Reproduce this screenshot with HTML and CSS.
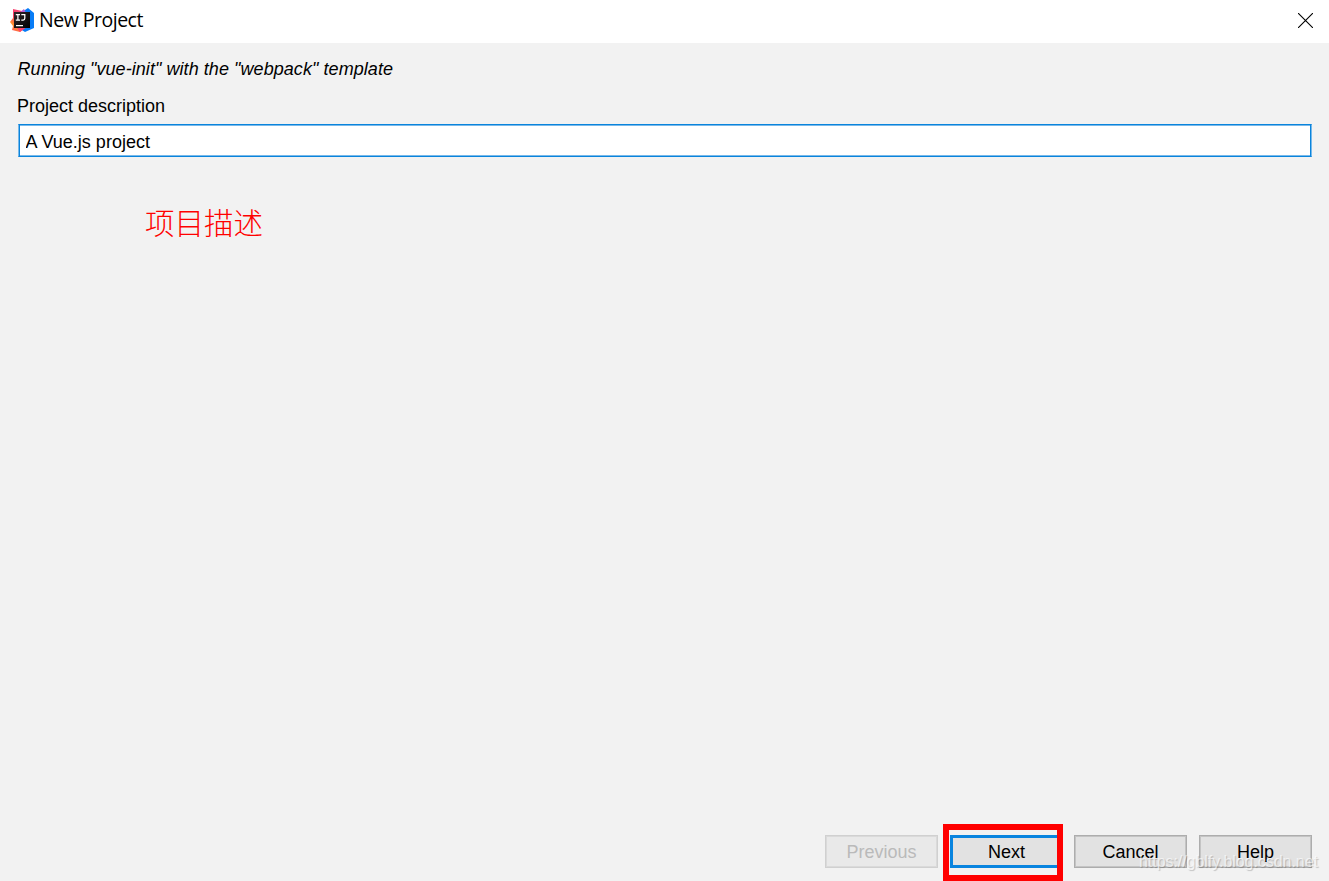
FILE: index.html
```
<!DOCTYPE html>
<html lang="en">
<head>
<meta charset="utf-8">
<title>New Project</title>
<link rel="stylesheet" href="styles.css">
</head>
<body>
<div class="dialog">
  <header class="titlebar">
    <svg class="logo" width="24" height="24" viewBox="0 0 24 24">
      <defs>
        <linearGradient id="warm" x1="0" y1="1" x2="0.4" y2="0"><stop offset="0" stop-color="#ff3e62"/><stop offset=".35" stop-color="#ff922e"/><stop offset=".7" stop-color="#fb3e68"/><stop offset="1" stop-color="#f54573"/></linearGradient>
        <linearGradient id="dark" x1="0" y1="0" x2="1" y2="1"><stop offset="0" stop-color="#30262c"/><stop offset="1" stop-color="#000"/></linearGradient>
      </defs>
      <path d="M3 1 12 3 15 19 10 24 2 22 3 18 0 14 3 10Z" fill="url(#warm)"/>
      <path d="M12 4 18 0 24 5V20L15 24 7 19Z" fill="#087cf6"/>
      <path d="M10 19H17L10 24 7 20Z" fill="#ff416b"/>
      <path d="M9 5 14 1 16 5Z" fill="#b65bd2"/>
      <path d="M4 4H20V20H4Z" fill="url(#dark)"/>
      <path d="M5.8 6.5H10M7.9 6.5V12M5.8 12H10M11.3 6.5H14.8V10.3Q14.8 12 13.2 12H11.3M6 17.5H13" fill="none" stroke="#fff" stroke-width="1.25"/>
    </svg>
    <h1 class="title">New Project</h1>
    <svg class="close" width="15" height="15" viewBox="0 0 15 15"><path d="M0 0 15 15M15 0 0 15" stroke="#000" stroke-width="1.1"/></svg>
  </header>
  <main class="content">
    <p class="status">Running "vue-init" with the "webpack" template</p>
    <label class="label" for="description">Project description</label>
    <input class="field" id="description" value="A Vue.js project">
    <p class="note">项目描述</p>
  </main>
  <footer class="actions">
    <button class="button disabled" disabled>Previous</button>
    <div class="highlight"><button class="button primary">Next</button></div>
    <button class="button">Cancel</button>
    <button class="button">Help</button>
  </footer>
  <div class="watermark">https://gblfy.blog.csdn.net</div>
</div>
</body>
</html>
```
FILE: styles.css
```
* { box-sizing: border-box; }
body { margin: 0; font: 18px/22px "Liberation Sans", Arial, sans-serif; color: #000; }
.dialog { position: relative; display: flex; flex-direction: column; width: 1329px; height: 881px; overflow: hidden; background: #f2f2f2; }
.titlebar { display: flex; align-items: center; height: 43px; padding: 0 16px 3px 10px; background: #fff; }
.logo { flex: none; }
.title { margin: 0 0 0 5px; font: 400 19.5px/26px "Open Sans", "Noto Sans", sans-serif; letter-spacing: -.5px; }
.close { margin: 1px 0 0 auto; }
.content { display: flex; flex: 1; flex-direction: column; padding: 15px 17px 0; }
.status { margin: 0 0 0 .5px; font-style: italic; letter-spacing: .06px; }
.label { margin-top: 15px; }
.field { width: 1294px; height: 33px; margin: 7px 0 0 1px; padding: 3px 5px 0 6.5px; border: 1px solid #0a84dc; border-left-color: #78b9ea; border-right-color: #78b9ea; outline: none; box-shadow: inset 1px 0 #0a84dc, inset -1px 0 #0a84dc, inset 0 1px #78b9ea, inset 0 -1px #78b9ea; border-radius: 0; background: #fff; font: inherit; color: #000; }
.note { margin: 46px 0 0 128px; font: 300 29.5px/36px "Noto Sans CJK SC", sans-serif; color: #f00; }
.actions { display: flex; align-items: flex-start; height: 57px; padding-left: 825px; }
.button { flex: none; width: 113px; height: 33px; margin: 11px 12px 0 0; padding: 1px 0 0; border: 1px solid #adadad; border-radius: 0; background: #e2e2e2; box-shadow: inset 0 0 0 1px #c4c4c4; font: inherit; color: #000; }
.disabled { margin-right: 5px; border-color: #d0d0d0; background: #e9e9e9; box-shadow: inset 0 0 0 1px #dadada; color: #bababa; }
.highlight { flex: none; width: 120px; height: 57px; margin-right: 11px; border: 6px solid #f00; overflow: hidden; }
.primary { margin: 5px 0 0 1px; border: 3px solid #0984df; box-shadow: none; }
.watermark { position: absolute; left: 1139px; top: 852px; font: 16px/20px "Liberation Sans", Arial, sans-serif; letter-spacing: -.05px; color: rgba(255, 255, 255, .65); text-shadow: 1px 1px 1px rgba(0, 0, 0, .2); white-space: nowrap; }
```
